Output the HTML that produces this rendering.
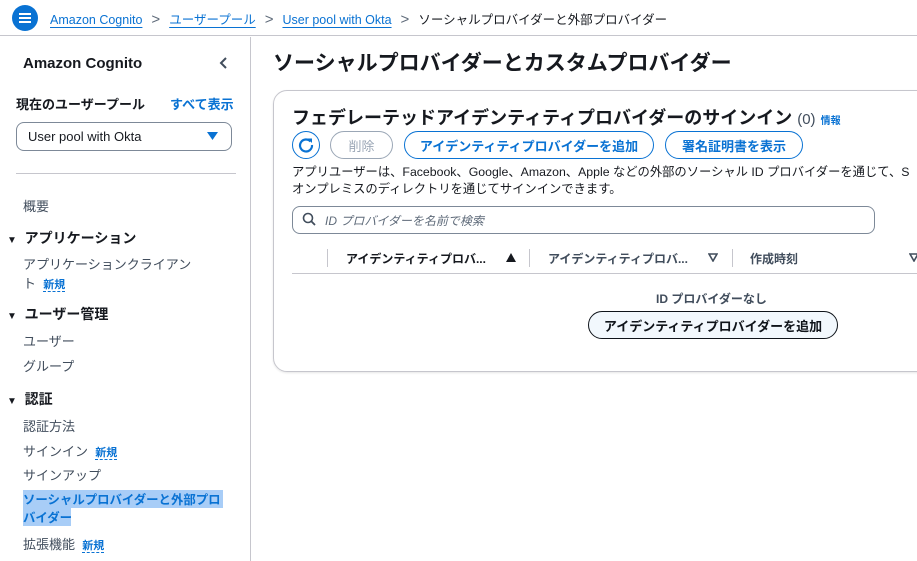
<!DOCTYPE html>
<html><head><meta charset="utf-8"><style>
*{box-sizing:border-box;margin:0;padding:0}
body{width:917px;height:561px;overflow:hidden;background:#fff;font-family:"Liberation Sans","Noto Sans CJK JP",sans-serif;color:#16191f;position:relative}
.a{position:absolute;white-space:nowrap}
.lnk{color:#0972d3;text-decoration:underline;text-underline-offset:3px}
.new{color:#0972d3;font-weight:bold;font-size:11px;border-bottom:1px dashed #0972d3;line-height:14px}
.btn{position:absolute;height:28px;border:1.5px solid #0972d3;border-radius:16px;color:#0972d3;font-weight:bold;font-size:13px;display:flex;align-items:center;justify-content:center}
.nav{font-size:13px;color:#414d5c}
.sec{font-size:14px;font-weight:bold}
.chev{display:inline-block;margin:0 9px;color:#5f6b7a;font-size:15px}
</style></head><body>
<div class="a" style="left:0;top:0;width:917px;height:36px;border-bottom:1px solid #c6c6cd"></div>
<div class="a" style="left:12px;top:5px;width:26px;height:26px;border-radius:50%;background:#0972d3">
<div style="position:absolute;left:7px;top:8px;width:12px;height:2px;background:#fff;box-shadow:0 4px 0 #fff,0 8px 0 #fff"></div></div>
<div class="a" style="left:50px;top:9px;font-size:12.5px;color:#414d5c">
<span class="lnk">Amazon Cognito</span><span class="chev">&gt;</span><span class="lnk">ユーザープール</span><span class="chev">&gt;</span><span class="lnk">User pool with Okta</span><span class="chev">&gt;</span><span style="color:#16191f">ソーシャルプロバイダーと外部プロバイダー</span></div>
<div class="a" style="left:250px;top:37px;width:1px;height:524px;background:#c6c6cd"></div>
<div class="a" style="left:23px;top:55px;font-size:15px;font-weight:bold">Amazon Cognito</div>
<svg class="a" style="left:219px;top:57px" width="10" height="12" viewBox="0 0 10 12"><path d="M7 1L2 6l5 5" fill="none" stroke="#414d5c" stroke-width="2"/></svg>
<div class="a" style="left:16px;top:94px;font-size:13px;font-weight:bold">現在のユーザープール</div>
<div class="a" style="left:170px;top:94px;font-size:13px;font-weight:bold;color:#0972d3">すべて表示</div>
<div class="a" style="left:16px;top:122px;width:216px;height:29px;border:1px solid #7d8998;border-radius:8px;font-size:13px;padding:6px 11px">User pool with Okta</div>
<svg class="a" style="left:207px;top:132px" width="11" height="8" viewBox="0 0 11 8"><path d="M0 0h11L5.5 8z" fill="#0972d3"/></svg>
<div class="a" style="left:16px;top:173px;width:220px;height:1px;background:#c6c6cd"></div>
<div class="a nav" style="left:23px;top:196px">概要</div>
<div class="a sec" style="left:7px;top:228px"><span style="font-size:10px">▼</span>&nbsp; アプリケーション</div>
<div class="a nav" style="left:23px;top:254px">アプリケーションクライアン</div>
<div class="a nav" style="left:23px;top:273px">ト &nbsp;<span class="new">新規</span></div>
<div class="a sec" style="left:7px;top:304px"><span style="font-size:10px">▼</span>&nbsp; ユーザー管理</div>
<div class="a nav" style="left:23px;top:331px">ユーザー</div>
<div class="a nav" style="left:23px;top:356px">グループ</div>
<div class="a sec" style="left:7px;top:389px"><span style="font-size:10px">▼</span>&nbsp; 認証</div>
<div class="a nav" style="left:23px;top:416px">認証方法</div>
<div class="a nav" style="left:23px;top:441px">サインイン &nbsp;<span class="new">新規</span></div>
<div class="a nav" style="left:23px;top:465px">サインアップ</div>
<div class="a" style="left:23px;top:490px;width:200px;height:18px;background:#a8cdf7"></div>
<div class="a" style="left:23px;top:508px;width:48px;height:18px;background:#a8cdf7"></div>
<div class="a" style="left:23px;top:491px;font-size:12.4px;font-weight:bold;color:#0972d3;line-height:18px">ソーシャルプロバイダーと外部プロ<br>バイダー</div>
<div class="a nav" style="left:23px;top:534px">拡張機能 &nbsp;<span class="new">新規</span></div>
<div class="a" style="left:273px;top:47px;font-size:21px;font-weight:bold">ソーシャルプロバイダーとカスタムプロバイダー</div>
<div class="a" style="left:273px;top:90px;width:680px;height:282px;border:1px solid #c6c6cd;border-radius:14px;box-shadow:0 1px 2px rgba(0,0,0,.1)"></div>
<div class="a" style="left:292px;top:104px;font-size:18px;font-weight:bold">フェデレーテッドアイデンティティプロバイダーのサインイン <span style="font-weight:normal;color:#414d5c;font-size:15px">(0)</span> <span style="font-size:10px;color:#0972d3">情報</span></div>
<div class="a" style="left:292px;top:131px;width:28px;height:28px;border:1.5px solid #0972d3;border-radius:50%"></div>
<svg class="a" style="left:297px;top:136px" width="18" height="18" viewBox="0 0 18 18"><path d="M13.5 5.5A6 6 0 1 0 15 9" fill="none" stroke="#0972d3" stroke-width="2.2"/><path d="M10.5 2.5h4.5v4.5z" fill="#0972d3"/></svg>
<div class="btn" style="left:330px;top:131px;width:63px;border-color:#9ba7b6;color:#9ba7b6;font-weight:normal">削除</div>
<div class="btn" style="left:404px;top:131px;width:250px">アイデンティティプロバイダーを追加</div>
<div class="btn" style="left:665px;top:131px;width:138px">署名証明書を表示</div>
<div class="a" style="left:292px;top:164px;font-size:12.3px;line-height:17px;color:#16191f">アプリユーザーは、Facebook、Google、Amazon、Apple などの外部のソーシャル ID プロバイダーを通じて、S<br>オンプレミスのディレクトリを通じてサインインできます。</div>
<div class="a" style="left:292px;top:206px;width:583px;height:28px;border:1px solid #7d8998;border-radius:8px"></div>
<svg class="a" style="left:302px;top:212px" width="14" height="14" viewBox="0 0 14 14"><circle cx="6" cy="6" r="4.5" fill="none" stroke="#414d5c" stroke-width="1.6"/><path d="M9.3 9.3L13 13" stroke="#414d5c" stroke-width="1.8"/></svg>
<div class="a" style="left:325px;top:212px;font-size:12px;font-style:italic;color:#5f6b7a">ID プロバイダーを名前で検索</div>
<div class="a" style="left:327px;top:249px;width:1px;height:18px;background:#c6c6cd"></div>
<div class="a" style="left:529px;top:249px;width:1px;height:18px;background:#c6c6cd"></div>
<div class="a" style="left:732px;top:249px;width:1px;height:18px;background:#c6c6cd"></div>
<div class="a" style="left:346px;top:250px;font-size:12px;font-weight:bold">アイデンティティプロバ...</div>
<svg class="a" style="left:506px;top:253px" width="10" height="9" viewBox="0 0 10 9"><path d="M5 0l5 9H0z" fill="#16191f"/></svg>
<div class="a" style="left:548px;top:250px;font-size:12px;font-weight:bold;color:#414d5c">アイデンティティプロバ...</div>
<svg class="a" style="left:708px;top:253px" width="10" height="9" viewBox="0 0 10 9"><path d="M1 1h8L5 8z" fill="none" stroke="#414d5c" stroke-width="1.6"/></svg>
<div class="a" style="left:750px;top:250px;font-size:12px;font-weight:bold;color:#414d5c">作成時刻</div>
<svg class="a" style="left:909px;top:253px" width="10" height="9" viewBox="0 0 10 9"><path d="M1 1h8L5 8z" fill="none" stroke="#414d5c" stroke-width="1.6"/></svg>
<div class="a" style="left:292px;top:273px;width:625px;height:1px;background:#c6c6cd"></div>
<div class="a" style="left:656px;top:290px;font-size:12px;font-weight:bold;color:#414d5c">ID プロバイダーなし</div>
<div class="btn" style="left:588px;top:311px;width:250px;height:28px;border-color:#0f141a;color:#0f141a;background:#f2f8fd;border-width:1px">アイデンティティプロバイダーを追加</div>
</body></html>
